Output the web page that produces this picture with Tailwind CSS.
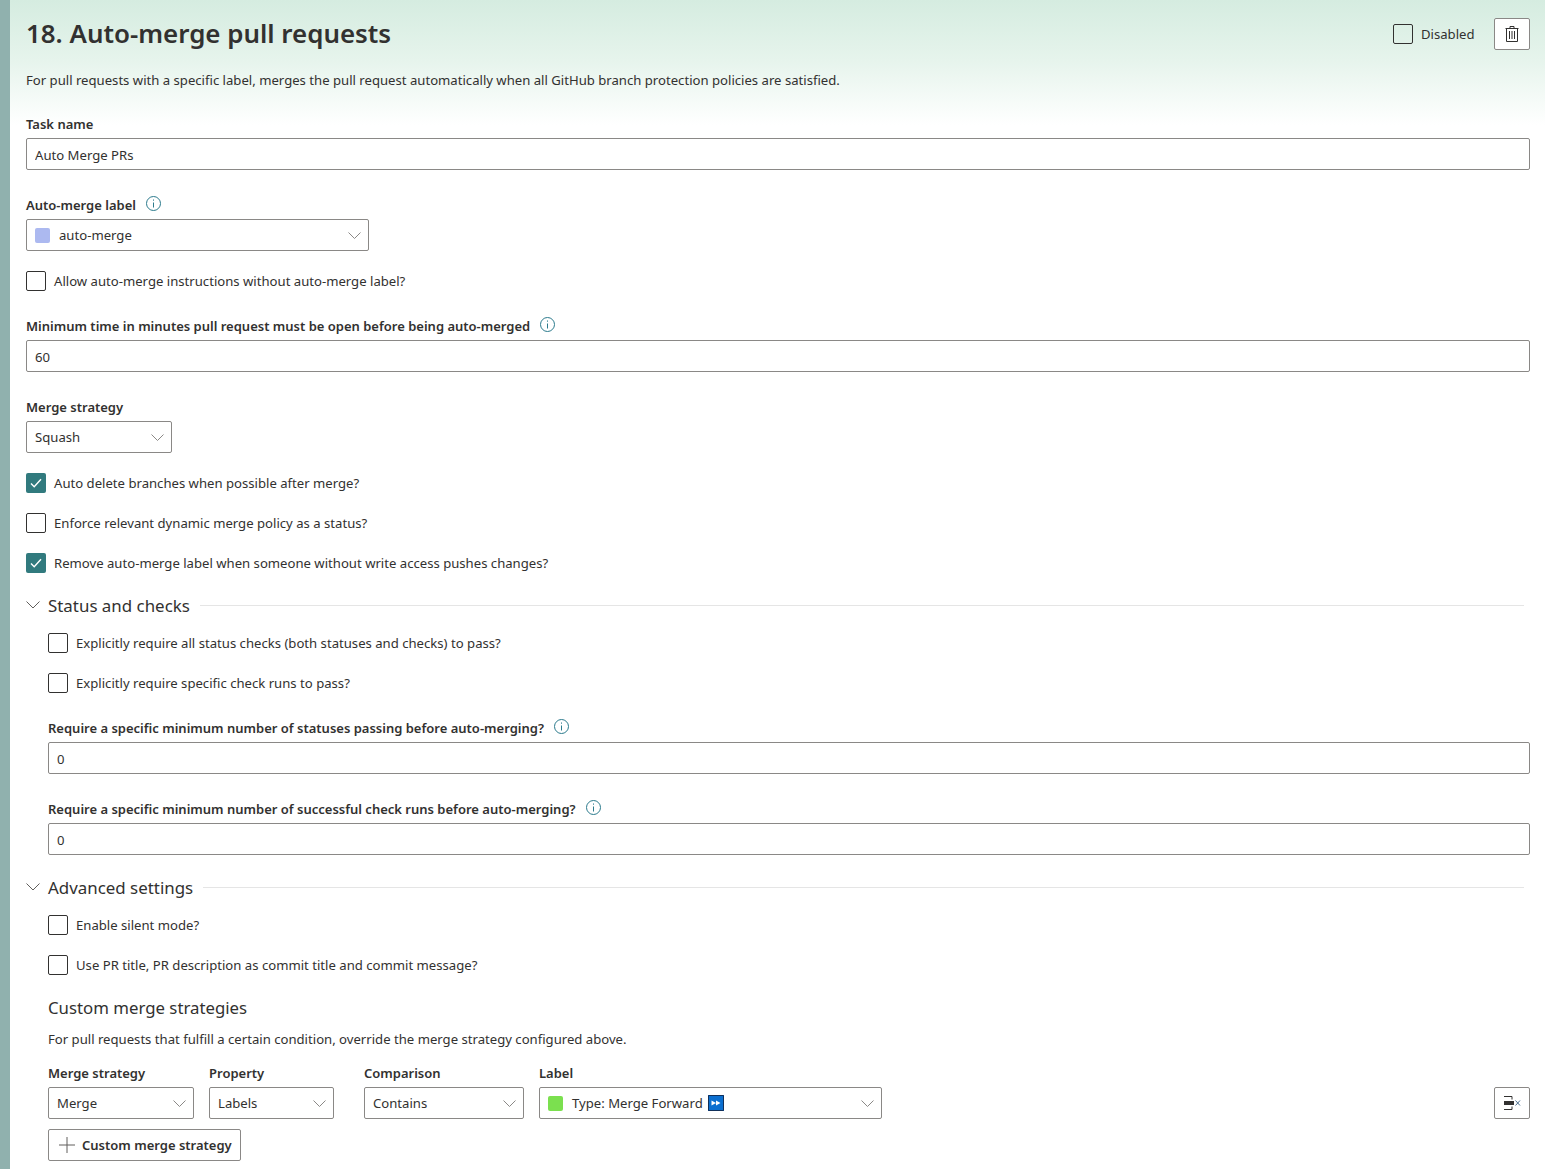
<!DOCTYPE html>
<html lang="en">
<head>
    <meta charset="utf-8"/>
    <title>Auto-merge pull requests</title>
    <script src="https://cdn.jsdelivr.net/npm/@tailwindcss/browser@4"></script>
</head>
<body class="bg-white font-['Noto_Sans','Open_Sans',sans-serif] text-[13.13px] leading-5 text-[#323130]">
<div class="flex h-[1169px] overflow-hidden">
    <!-- Left accent bar -->
    <div class="w-[10px] shrink-0 bg-[#90b1ae]"></div>

    <main class="flex-1 min-w-0 pl-4 pr-[15px] bg-[linear-gradient(to_bottom,#d5ece0_0px,#e6f4ec_60px,#ffffff_125px)]">
        <!-- Header -->
        <div class="flex items-start justify-between h-[70px]">
            <h1 class="text-[25.9px] leading-9 mt-[15px] font-semibold">18. Auto-merge pull requests</h1>
            <div class="flex items-center mt-[18px]">
                <span class="w-5 h-5 rounded-[2px] border border-[#323130] bg-transparent"></span>
                <span class="ml-2 w-[73px]">Disabled</span>
                <button class="w-9 h-8 flex items-center justify-center bg-white border border-[#8a8886] rounded-[2px]">
                    <svg width="14" height="16" viewBox="0 0 14 16" fill="none" stroke="#323130"><path d="M.5 2.5h13M5 2.5V.5h4v2M1.5 2.5v13h11v-13M4.5 5v8M7 5v8M9.5 5v8"/></svg>
                </button>
            </div>
        </div>
        <p>For pull requests with a specific label, merges the pull request automatically when all GitHub branch protection policies are satisfied.</p>

        <!-- Task name -->
        <label class="block mt-6 font-semibold text-[13px]">Task name</label>
        <input class="block w-full h-8 mt-1 px-2 pt-px bg-white border border-[#8a8886] rounded-[2px]" value="Auto Merge PRs"/>

        <!-- Auto-merge label -->
        <div class="flex items-center gap-[10px] mt-[25px]">
            <label class="font-semibold text-[13px]">Auto-merge label</label>
            <svg class="mb-[3px]" width="15" height="15" viewBox="0 0 15 15" fill="none" stroke="#2b7a8c"><circle cx="7.5" cy="7.5" r="7"/><path d="M7.5 6.5v5M7.5 3.5v1.2"/></svg>
        </div>
        <div class="flex items-center w-[343px] h-8 mt-1 px-2 bg-white border border-[#8a8886] rounded-[2px]">
            <span class="w-[15px] h-[15px] rounded-[2px] bg-[#acb9f0]"></span>
            <span class="ml-[9px]">auto-merge</span>
            <svg class="ml-auto -mr-px" width="13" height="7" viewBox="0 0 13 7" fill="none" stroke="#8a8886"><path d="M.5.5 6.5 6.5 12.5.5"/></svg>
        </div>

        <div class="flex items-center gap-2 mt-5">
            <span class="w-5 h-5 rounded-[2px] border border-[#323130]"></span>
            <span>Allow auto-merge instructions without auto-merge label?</span>
        </div>

        <!-- Minimum time -->
        <div class="flex items-center gap-[10px] mt-[25px]">
            <label class="font-semibold text-[13px]">Minimum time in minutes pull request must be open before being auto-merged</label>
            <svg class="mb-[3px]" width="15" height="15" viewBox="0 0 15 15" fill="none" stroke="#2b7a8c"><circle cx="7.5" cy="7.5" r="7"/><path d="M7.5 6.5v5M7.5 3.5v1.2"/></svg>
        </div>
        <input class="block w-full h-8 mt-1 px-2 pt-px bg-white border border-[#8a8886] rounded-[2px]" value="60"/>

        <!-- Merge strategy -->
        <label class="block mt-[25px] font-semibold text-[13px]">Merge strategy</label>
        <div class="flex items-center justify-between w-[146px] h-8 mt-1 px-2 bg-white border border-[#8a8886] rounded-[2px]">
            <span>Squash</span>
            <svg class="-mr-px" width="13" height="7" viewBox="0 0 13 7" fill="none" stroke="#8a8886"><path d="M.5.5 6.5 6.5 12.5.5"/></svg>
        </div>

        <div class="flex items-center gap-2 mt-5">
            <span class="w-5 h-5 rounded-[2px] bg-[#317a7e] flex items-center justify-center">
                <svg width="12" height="10" viewBox="0 0 12 10" fill="none" stroke="#ffffff" stroke-width="1.4"><path d="M1 5.5 4.2 8.7 11 1.2"/></svg>
            </span>
            <span>Auto delete branches when possible after merge?</span>
        </div>
        <div class="flex items-center gap-2 mt-5">
            <span class="w-5 h-5 rounded-[2px] border border-[#323130]"></span>
            <span>Enforce relevant dynamic merge policy as a status?</span>
        </div>
        <div class="flex items-center gap-2 mt-5">
            <span class="w-5 h-5 rounded-[2px] bg-[#317a7e] flex items-center justify-center">
                <svg width="12" height="10" viewBox="0 0 12 10" fill="none" stroke="#ffffff" stroke-width="1.4"><path d="M1 5.5 4.2 8.7 11 1.2"/></svg>
            </span>
            <span>Remove auto-merge label when someone without write access pushes changes?</span>
        </div>

        <!-- Status and checks -->
        <div class="flex items-center h-6 mt-5 pr-[6px]">
            <svg width="14" height="8" viewBox="0 0 14 8" fill="none" stroke="#605e5c"><path d="M.5.5 7 7 13.5.5"/></svg>
            <h2 class="ml-2 pt-px text-[16.9px] leading-6">Status and checks</h2>
            <div class="flex-1 ml-[10px] border-t border-[#e5e5e5]"></div>
        </div>
        <div class="pl-[22px]">
            <div class="flex items-center gap-2 mt-4">
                <span class="w-5 h-5 rounded-[2px] border border-[#323130]"></span>
                <span>Explicitly require all status checks (both statuses and checks) to pass?</span>
            </div>
            <div class="flex items-center gap-2 mt-5">
                <span class="w-5 h-5 rounded-[2px] border border-[#323130]"></span>
                <span>Explicitly require specific check runs to pass?</span>
            </div>
            <div class="flex items-center gap-[10px] mt-[25px]">
                <label class="font-semibold text-[13px]">Require a specific minimum number of statuses passing before auto-merging?</label>
                <svg class="mb-[3px]" width="15" height="15" viewBox="0 0 15 15" fill="none" stroke="#2b7a8c"><circle cx="7.5" cy="7.5" r="7"/><path d="M7.5 6.5v5M7.5 3.5v1.2"/></svg>
            </div>
            <input class="block w-full h-8 mt-1 px-2 pt-px bg-white border border-[#8a8886] rounded-[2px]" value="0"/>
            <div class="flex items-center gap-[10px] mt-[25px]">
                <label class="font-semibold text-[13px]">Require a specific minimum number of successful check runs before auto-merging?</label>
                <svg class="mb-[3px]" width="15" height="15" viewBox="0 0 15 15" fill="none" stroke="#2b7a8c"><circle cx="7.5" cy="7.5" r="7"/><path d="M7.5 6.5v5M7.5 3.5v1.2"/></svg>
            </div>
            <input class="block w-full h-8 mt-1 px-2 pt-px bg-white border border-[#8a8886] rounded-[2px]" value="0"/>
        </div>

        <!-- Advanced settings -->
        <div class="flex items-center h-6 mt-5 pr-[6px]">
            <svg width="14" height="8" viewBox="0 0 14 8" fill="none" stroke="#605e5c"><path d="M.5.5 7 7 13.5.5"/></svg>
            <h2 class="ml-2 pt-px text-[16.9px] leading-6">Advanced settings</h2>
            <div class="flex-1 ml-[10px] border-t border-[#e5e5e5]"></div>
        </div>
        <div class="pl-[22px]">
            <div class="flex items-center gap-2 mt-4">
                <span class="w-5 h-5 rounded-[2px] border border-[#323130]"></span>
                <span>Enable silent mode?</span>
            </div>
            <div class="flex items-center gap-2 mt-5">
                <span class="w-5 h-5 rounded-[2px] border border-[#323130]"></span>
                <span>Use PR title, PR description as commit title and commit message?</span>
            </div>

            <h3 class="mt-[21px] text-[16.8px] leading-6">Custom merge strategies</h3>
            <p class="mt-[9px]">For pull requests that fulfill a certain condition, override the merge strategy configured above.</p>

            <!-- Strategy row -->
            <div class="flex items-end mt-[14px]">
                <div class="w-[146px]">
                    <label class="block font-semibold text-[13px]">Merge strategy</label>
                    <div class="flex items-center justify-between h-8 mt-1 px-2 border border-[#8a8886] rounded-[2px]">
                        <span>Merge</span>
                        <svg class="-mr-px" width="13" height="7" viewBox="0 0 13 7" fill="none" stroke="#8a8886"><path d="M.5.5 6.5 6.5 12.5.5"/></svg>
                    </div>
                </div>
                <div class="w-[125px] ml-[15px]">
                    <label class="block font-semibold text-[13px]">Property</label>
                    <div class="flex items-center justify-between h-8 mt-1 px-2 border border-[#8a8886] rounded-[2px]">
                        <span>Labels</span>
                        <svg class="-mr-px" width="13" height="7" viewBox="0 0 13 7" fill="none" stroke="#8a8886"><path d="M.5.5 6.5 6.5 12.5.5"/></svg>
                    </div>
                </div>
                <div class="w-40 ml-[30px]">
                    <label class="block font-semibold text-[13px]">Comparison</label>
                    <div class="flex items-center justify-between h-8 mt-1 px-2 border border-[#8a8886] rounded-[2px]">
                        <span>Contains</span>
                        <svg class="-mr-px" width="13" height="7" viewBox="0 0 13 7" fill="none" stroke="#8a8886"><path d="M.5.5 6.5 6.5 12.5.5"/></svg>
                    </div>
                </div>
                <div class="w-[343px] ml-[15px]">
                    <label class="block font-semibold text-[13px]">Label</label>
                    <div class="flex items-center h-8 mt-1 px-2 border border-[#8a8886] rounded-[2px]">
                        <span class="w-[15px] h-[15px] rounded-[2px] bg-[#7be04f]"></span>
                        <span class="ml-[9px]">Type: Merge Forward</span>
                        <svg class="ml-[5px]" width="16" height="16" viewBox="0 0 16 16"><rect width="16" height="16" fill="#0b6fd0"/><path d="M.5.5h15v15H.5z" fill="none" stroke="#12305a"/><path d="M3.5 5.5 8 8l-4.5 2.5zM8 5.5 12.5 8 8 10.5z" fill="#ffffff"/></svg>
                        <svg class="ml-auto -mr-px" width="13" height="7" viewBox="0 0 13 7" fill="none" stroke="#8a8886"><path d="M.5.5 6.5 6.5 12.5.5"/></svg>
                    </div>
                </div>
                <button class="ml-auto w-9 h-8 flex items-center justify-center bg-white border border-[#8a8886] rounded-[2px]">
                    <svg width="18" height="14" viewBox="0 0 18 14" fill="none"><path d="M1 .5h8v3M1 13.5h8v-3" stroke="#323130"/><rect x="1" y="5" width="10" height="4" fill="#323130"/><path d="M12.5 4.5l4.5 5M17 4.5l-4.5 5" stroke="#4b6f8f"/></svg>
                </button>
            </div>

            <button class="flex items-center h-8 mt-[10px] w-[193px] pl-[10px] border border-[#8a8886] rounded-[2px] font-semibold text-[13px]">
                <svg width="16" height="16" viewBox="0 0 16 16" fill="none" stroke="#605e5c"><path d="M8 0v16M0 8h16"/></svg>
                <span class="ml-[7px]">Custom merge strategy</span>
            </button>
        </div>
    </main>
</div>
</body>
</html>
